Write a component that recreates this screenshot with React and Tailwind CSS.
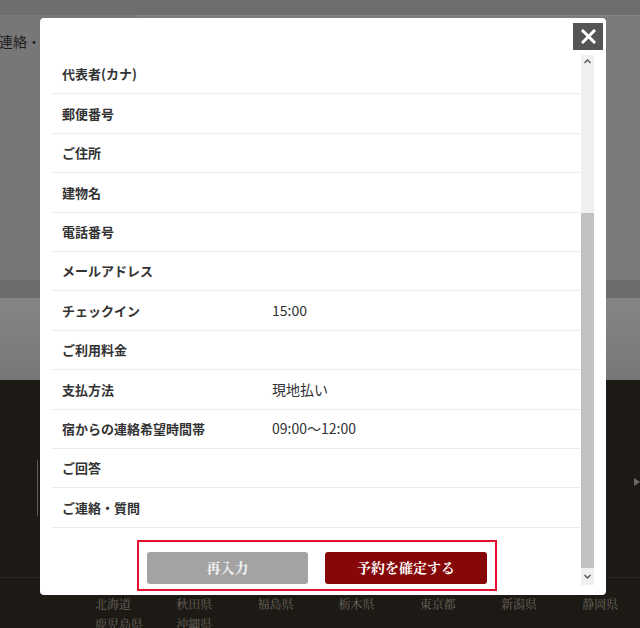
import React from "react";

const rows = [
  ["代表者(カナ)", ""],
  ["郵便番号", ""],
  ["ご住所", ""],
  ["建物名", ""],
  ["電話番号", ""],
  ["メールアドレス", ""],
  ["チェックイン", "15:00"],
  ["ご利用料金", ""],
  ["支払方法", "現地払い"],
  ["宿からの連絡希望時間帯", "09:00～12:00"],
  ["ご回答", ""],
  ["ご連絡・質問", ""],
];

const prefs1 = ["北海道", "秋田県", "福島県", "栃木県", "東京都", "新潟県", "静岡県"];
const prefs2 = ["鹿児島県", "沖縄県"];

const sans = { fontFamily: '"Noto Sans CJK JP", "Liberation Sans", sans-serif' };
const serif = { fontFamily: '"Noto Serif CJK JP", "Liberation Serif", "Noto Sans CJK JP", serif' };

export default function App() {
  return (
    <div className="relative w-[640px] h-[628px] overflow-hidden" style={sans}>
      {/* background page */}
      <div className="flex flex-col w-full h-full">
        <div className="h-[15px] shrink-0 bg-[#6e6e6e]" />
        <div className="h-[265px] shrink-0 bg-[#777777] flex">
          <div className="w-[137px] pt-[16px]">
            <span className="block text-[14px] text-[#1e1e1e] -ml-[1px] whitespace-nowrap">連絡・質問</span>
          </div>
          <div className="flex-1 bg-[#7b7b7b] border-t border-l border-[#868686]" />
        </div>
        <div className="h-[18px] shrink-0 bg-[#6c6c6c]" />
        <div className="h-[82px] shrink-0 bg-gradient-to-b from-[#858585] to-[#777777]" />
        <div className="flex-1 bg-[#1d1a16] flex flex-col">
          <div className="h-[198px] shrink-0 flex items-center justify-between pl-[37px] border-b border-[#2c2925]">
            <div className="w-px h-[56px] bg-[#5c5c5c] mt-[19px]" />
            <div className="w-0 h-0 border-y-[4px] border-y-transparent border-l-[6px] border-l-[#6a6a6a] mt-[6px]" />
          </div>
          <div className="pl-[95px] pt-[16px] text-[12px] leading-[20px] text-[#6b655c]" style={serif}>
            <div className="flex">
              {prefs1.map((p) => (
                <span key={p} className="w-[81.2px] shrink-0 whitespace-nowrap">{p}</span>
              ))}
            </div>
            <div className="flex">
              {prefs2.map((p) => (
                <span key={p} className="w-[81.2px] shrink-0 whitespace-nowrap">{p}</span>
              ))}
            </div>
          </div>
        </div>
      </div>

      {/* modal */}
      <div className="absolute left-[40px] top-[18px] w-[566px] h-[577px] bg-white rounded-[4px] pt-[37px] pl-[12px] pr-[12px] pb-[10px] flex">
        <button className="absolute left-[533px] top-[5px] w-[30px] h-[27px] bg-[#555555] flex items-center justify-center">
          <svg width="15" height="15" viewBox="0 0 15 15">
            <path d="M2 2 L13 13 M13 2 L2 13" stroke="white" strokeWidth="3" strokeLinecap="square" />
          </svg>
        </button>

        <div className="flex-1 overflow-hidden">
          {rows.map(([label, value]) => (
            <div key={label} className="h-[39.4px] flex items-center border-b border-[#ececec] pl-[10px] text-[#333333]">
              <div className="w-[210px] shrink-0 text-[13px] font-bold">{label}</div>
              <div className="text-[14px]">{value}</div>
            </div>
          ))}
          <div className="flex justify-center gap-[17px] pt-[24px] pl-[2px]">
            <button className="w-[161px] h-[32px] rounded-[3px] bg-[#a3a3a3] text-[#f2f2f2] text-[14px] font-bold" style={serif}>
              再入力
            </button>
            <button className="w-[162px] h-[32px] rounded-[3px] bg-[#860707] text-white text-[14px] font-bold" style={serif}>
              予約を確定する
            </button>
          </div>
        </div>

        <div className="w-[13px] ml-[1px] bg-[#f0f0f0] flex flex-col">
          <div className="h-[13px] flex items-center justify-center">
            <svg width="7" height="5" viewBox="0 0 7 5">
              <path d="M0.5 4 L3.5 1 L6.5 4" stroke="#555" strokeWidth="1.4" fill="none" />
            </svg>
          </div>
          <div className="h-[145px]" />
          <div className="flex-1 bg-[#c1c1c1]" />
          <div className="h-[17px] flex items-center justify-center">
            <svg width="7" height="5" viewBox="0 0 7 5">
              <path d="M0.5 1 L3.5 4 L6.5 1" stroke="#555" strokeWidth="1.4" fill="none" />
            </svg>
          </div>
        </div>

        {/* highlight annotation */}
        <div className="absolute left-[97px] top-[522px] w-[360px] h-[51px] border-2 border-[#e3102f] pointer-events-none" />
      </div>
    </div>
  );
}
